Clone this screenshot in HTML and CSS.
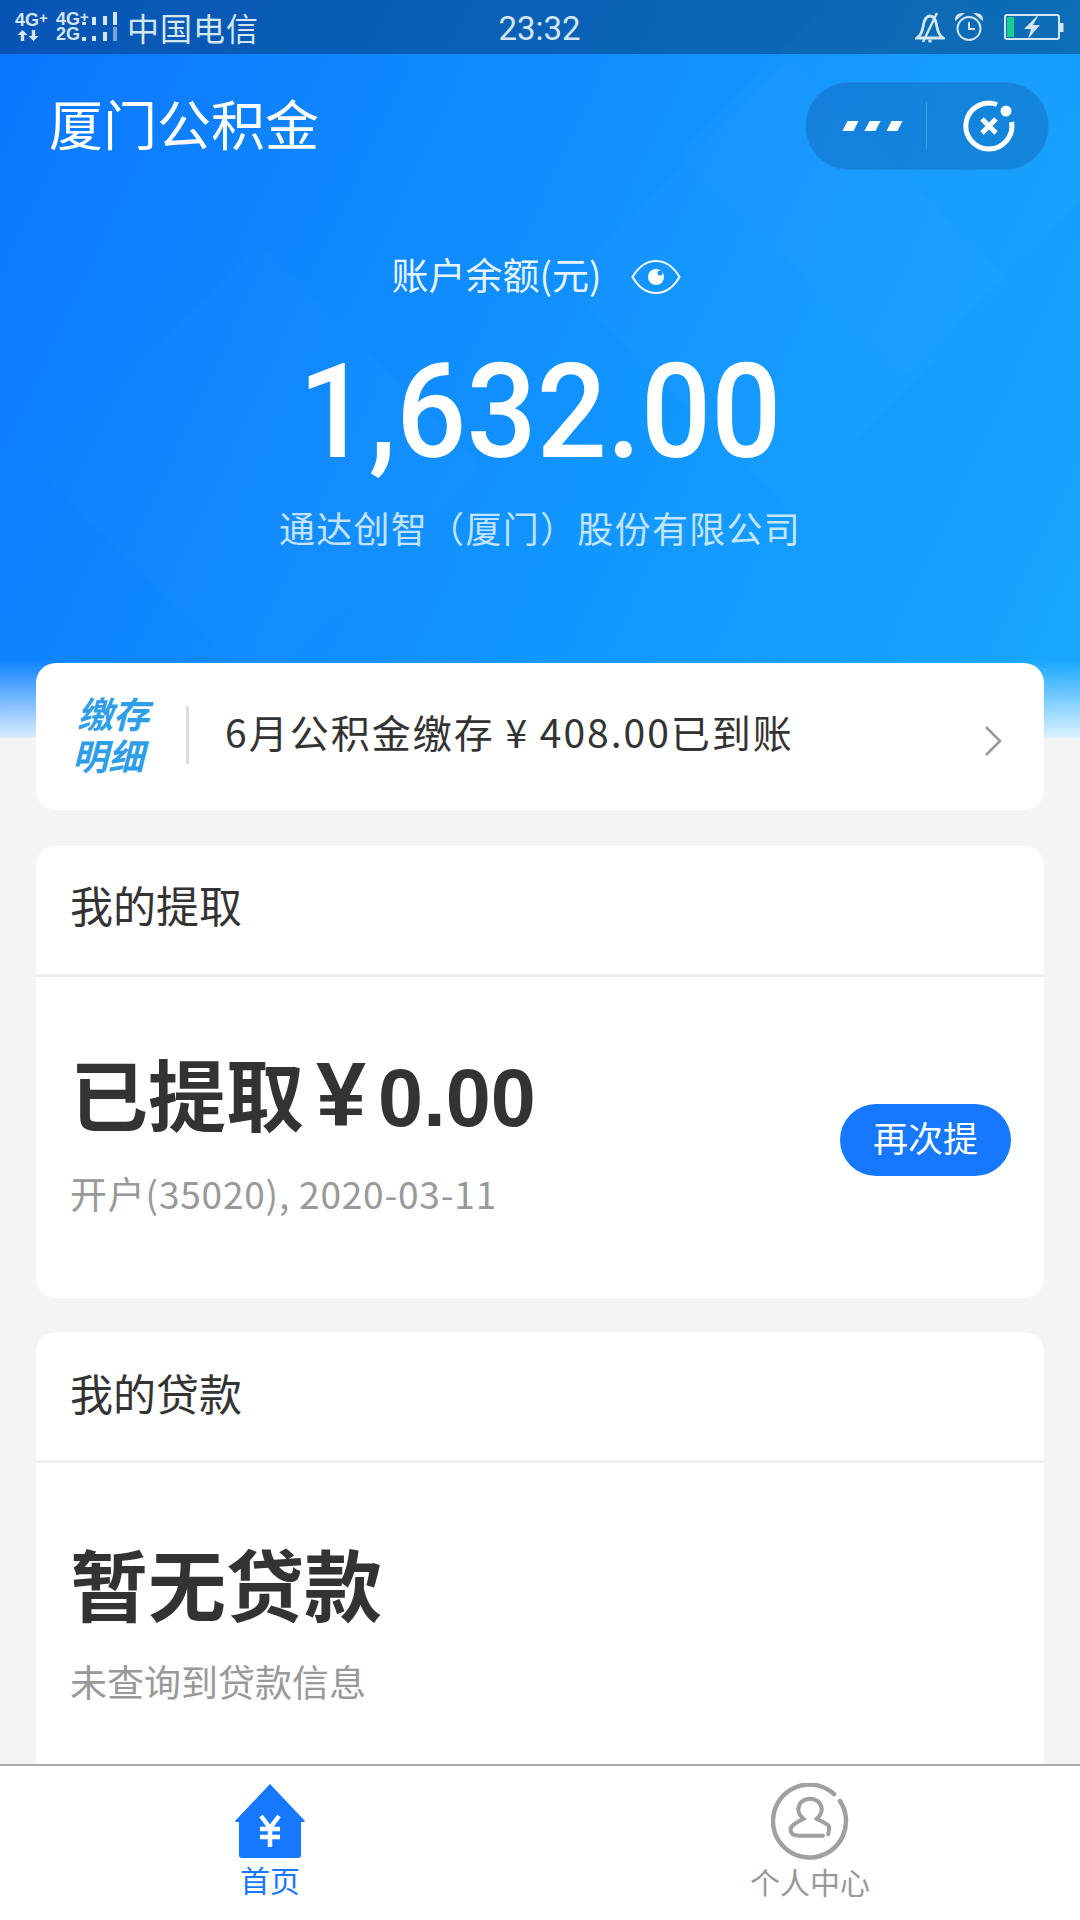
FILE: index.html
```html
<!DOCTYPE html>
<html>
<head>
  <meta charset="utf-8">
  <title>厦门公积金</title>
  <link rel="stylesheet" href="styles.css">
</head>
<body>
  <div class="page">
    <header class="hero">
      <span class="diamond diamond-left"></span>
      <span class="diamond diamond-mid"></span>
      <span class="diamond diamond-right"></span>

      <div class="status-bar">
        <div class="status-left">
          <div class="net">
            <span>4G<sup>+</sup></span>
            <svg class="net-arrows" width="22" height="11" viewBox="0 0 22 11"><path d="M5.500 0l5 5H7.200v6H3.800V5H.5zM16.500 11l-5-5h3.300V0h3.400v6h3.300z" fill="#d5e6f3"/></svg>
          </div>
          <div class="net net-second">
            <span>4G<sup>+</sup></span>
            <span>2G</span>
          </div>
          <svg class="signal" width="36" height="30" viewBox="0 0 36 30">
            <g fill="#d5e6f3">
              <rect x="0" y="25" width="4" height="4"/>
              <rect x="0" y="10" width="4" height="3"/>
              <rect x="10" y="24" width="4" height="5"/>
              <rect x="10" y="5" width="4" height="8"/>
              <rect x="21" y="20" width="4" height="9"/>
              <rect x="21" y="4" width="4" height="9"/>
              <rect x="31" y="0" width="4" height="13"/>
              <rect x="31" y="15" width="4" height="14" opacity=".55"/>
            </g>
          </svg>
          <span class="carrier">中国电信</span>
        </div>
        <span class="clock">23:32</span>
        <div class="status-right">
          <svg width="30" height="31" viewBox="0 0 30 31" fill="none" stroke="#d5e6f3" stroke-width="2.800">
            <path d="M2 26c3-2 5-5 6-11 1-7 3-11 7-11s6 4 7 11c1 6 3 9 6 11z"/>
            <path d="M8 30L22 1" stroke-width="2.400"/>
            <circle cx="15" cy="29" r="1.800" fill="#d5e6f3" stroke="none"/>
          </svg>
          <svg class="alarm" width="28" height="28" viewBox="0 0 28 28" fill="none" stroke="#d5e6f3" stroke-width="2">
            <circle cx="14" cy="15.500" r="11.500"/>
            <path d="M14 9v7h6"/>
            <path d="M1 6c0-3 3-5 6-5zM27 6c0-3-3-5-6-5z" fill="#d5e6f3"/>
          </svg>
          <svg class="battery" width="60" height="26" viewBox="0 0 60 26" fill="none">
            <rect x="1" y="1" width="54" height="24" rx="2" stroke="#d5e6f3" stroke-width="2"/>
            <rect x="3" y="3" width="7" height="20" fill="#16cf8f"/>
            <rect x="56" y="9" width="3.500" height="9" fill="#d5e6f3"/>
            <path d="M33 2L20 15h7l-3 10 12-14h-7l5-9z" fill="#d5e6f3"/>
          </svg>
        </div>
      </div>

      <div class="title-bar">
        <span class="app-title">厦门公积金</span>
        <div class="capsule">
          <div class="capsule-more">
            <i></i><i></i><i></i>
          </div>
          <div class="capsule-close">
            <svg width="56" height="56" viewBox="0 0 56 56" fill="none" stroke="#fff">
              <path d="M36 6.500A23 23 0 1 0 50.500 24" stroke-width="5"/>
              <path d="M21 21l14 14M35 21L21 35" stroke-width="5"/>
              <circle cx="45" cy="13" r="5.500" fill="#fff" stroke="none"/>
            </svg>
          </div>
        </div>
      </div>

      <div class="balance">
        <div class="balance-label">
          <span>账户余额(元)</span>
          <svg class="eye" width="50" height="36" viewBox="0 0 50 36" fill="none">
            <path d="M1.500 18C8 7 16 2 25 2s17 5 23.500 16C42 29 34 34 25 34S8 29 1.500 18z" stroke="#fff" stroke-opacity=".9" stroke-width="2.200"/>
            <circle cx="25" cy="18" r="8" fill="#fff"/>
            <circle cx="29" cy="14" r="2.500" fill="#1691ff"/>
          </svg>
        </div>
        <div class="balance-amount">1,632.00</div>
        <div class="company">通达创智（厦门）股份有限公司</div>
      </div>
    </header>

    <main class="content">
      <section class="card notice">
        <div class="notice-tag">缴存<br><span>明细</span></div>
        <div class="notice-text">6月公积金缴存 ¥ 408.00已到账</div>
        <svg class="chevron" width="18" height="32" viewBox="0 0 18 32" fill="none"><path d="M2 2l14 14L2 30" stroke="#999" stroke-width="2.500"/></svg>
      </section>

      <section class="card">
        <div class="card-head">我的提取</div>
        <div class="card-body withdraw">
          <div>
            <div class="big-text">已提取<span class="yen">¥</span><span class="big-num">0.00</span></div>
            <div class="sub-text sub-date">开户(35020), 2020-03-11</div>
          </div>
          <button class="again-btn">再次提</button>
        </div>
      </section>

      <section class="card loan">
        <div class="card-head">我的贷款</div>
        <div class="card-body">
          <div class="big-text">暂无贷款</div>
          <div class="sub-text">未查询到贷款信息</div>
        </div>
      </section>
    </main>

    <nav class="tabbar">
      <div class="tab tab-active">
        <svg width="72" height="76" viewBox="0 0 72 76">
          <path d="M36 1l35 37-1 1h-3v33a3 3 0 0 1-3 3H8a3 3 0 0 1-3-3V39H2l-1-1z" fill="#1677ff"/>
          <path d="M27 33l9 12 9-12M36 45v19M26 46h20M26 54h20" fill="none" stroke="#fff" stroke-width="4.500"/>
        </svg>
        <span>首页</span>
      </div>
      <div class="tab">
        <svg width="78" height="78" viewBox="0 0 78 78" fill="none" stroke="#a0a0a0" stroke-linecap="round">
          <path d="M63 11A36.500 36.500 0 1 0 69 18" stroke-width="4.500"/>
          <path d="M52 52.700H29c-6 0-9.500-2-9.500-6 0-5 8-8 13-11-3.500-3-5.200-6-5.200-9 0-6.500 5-11 11.700-11s11.700 4.500 11.700 11c0 3-1.700 6-5 9 5 3 13 5.500 12.500 9.500-.1 2-.5 4-1 6" stroke-width="4"/>
        </svg>
        <span>个人中心</span>
      </div>
    </nav>
  </div>
</body>
</html>
```

FILE: styles.css
```css
* {
  box-sizing: border-box;
}

html,
body {
  margin: 0;
  padding: 0;
}

body {
  font-family: "Noto Sans CJK SC", "Noto Sans", sans-serif;
  color: #333;
  background: #f4f4f4;
}

.page {
  width: 1080px;
  height: 1920px;
  display: flex;
  flex-direction: column;
  overflow: hidden;
}

/* blue top part */
.hero {
  position: relative;
  height: 738px;
  flex: none;
  overflow: hidden;
  background:
    linear-gradient(to bottom, rgba(255, 255, 255, 0) 660px, rgba(255, 255, 255, .85) 738px),
    linear-gradient(115deg, #0c76ff 0%, #1194ff 55%, #18a8ff 100%);
}

.diamond {
  position: absolute;
  width: 317px;
  height: 317px;
  transform: rotate(45deg);
  background: rgba(255, 255, 255, .014);
  border-radius: 12px;
}

.diamond-left {
  left: 100px;
  top: 308px;
}

.diamond-mid {
  left: 630px;
  top: 125px;
}

.diamond-right {
  left: 744px;
  top: -4px;
}

.status-bar {
  position: relative;
  height: 54px;
  padding: 0 16px 0 15px;
  display: flex;
  align-items: center;
  justify-content: space-between;
  background: rgba(0, 30, 60, .38);
  color: #d5e6f3;
}

.status-left {
  width: 380px;
  display: flex;
  align-items: center;
}

.status-right {
  width: 380px;
  display: flex;
  align-items: center;
  justify-content: flex-end;
}

.alarm {
  margin-left: 10px;
}

.battery {
  margin-left: 21px;
}

.net {
  width: 40px;
  display: flex;
  flex-direction: column;
  font-family: "Liberation Sans", sans-serif;
  font-size: 18px;
  font-weight: bold;
  line-height: 15px;
  white-space: nowrap;
}

.net sup {
  font-size: 15px;
  line-height: 0;
  vertical-align: 3px;
}

.net-second {
  width: 27px;
  padding-left: 1px;
}

.net-arrows {
  margin: 2px 0 0 2px;
}

.carrier {
  margin-left: 9px;
  font-size: 32px;
  letter-spacing: 1px;
  line-height: 40px;
}

.clock {
  padding-top: 3px;
  font-family: "Roboto", sans-serif;
  font-size: 33px;
}

.title-bar {
  position: relative;
  height: 144px;
  padding: 0 31px 8px 49px;
  display: flex;
  align-items: center;
  justify-content: space-between;
}

.app-title {
  font-size: 54px;
  color: #fff;
}

.capsule {
  width: 244px;
  height: 88px;
  margin-top: 8px;
  display: flex;
  align-items: center;
  border-radius: 44px;
  background: rgba(10, 70, 130, .28);
  border: 1px solid rgba(255, 255, 255, .06);
}

.capsule-more {
  width: 121px;
  height: 48px;
  display: flex;
  align-items: center;
  justify-content: flex-end;
  gap: 11px;
  padding-right: 26px;
  border-right: 1px solid rgba(255, 255, 255, .2);
}

.capsule-more i {
  width: 11px;
  height: 10px;
  background: #fff;
  transform: skewX(-27deg);
}

.capsule-close {
  flex: 1;
  display: flex;
  justify-content: center;
  padding-left: 2px;
}

.balance {
  position: relative;
  text-align: center;
  color: #fff;
}

.balance-label {
  margin-top: 51px;
  height: 50px;
  padding-right: 8px;
  display: flex;
  align-items: center;
  justify-content: center;
  gap: 29px;
  font-size: 37px;
  color: rgba(255, 255, 255, .92);
}

.eye {
  margin-top: 6px;
}

.balance-amount {
  margin-top: 38px;
  font-family: "Roboto", sans-serif;
  font-size: 132px;
  font-weight: 500;
  line-height: 150px;
  transform: scaleX(.935);
}

.company {
  margin-top: 15px;
  font-size: 36px;
  line-height: 50px;
  letter-spacing: 1.300px;
  color: rgba(255, 255, 255, .75);
}

/* cards */
.content {
  flex: 1;
  min-height: 0;
  overflow: hidden;
  padding: 0 36px;
  margin-top: -75px;
  position: relative;
}

.card {
  background: #fff;
  border-radius: 20px;
  margin-bottom: 36px;
}

.notice {
  height: 147px;
  display: flex;
  align-items: center;
  padding: 0 42px 0 39px;
}

.notice-tag {
  width: 111px;
  height: 75px;
  font-size: 36px;
  line-height: 42px;
  font-weight: bold;
  font-style: italic;
  color: #2f9ee8;
  padding-left: 2px;
  margin-top: -16px;
}

.notice-tag span {
  margin-left: -5px;
}

.notice-text {
  flex: 1;
  height: 58px;
  margin-top: -4px;
  padding-left: 36px;
  border-left: 3px solid #ddd;
  font-size: 39px;
  line-height: 50px;
  letter-spacing: 2px;
}

.chevron {
  margin-top: 8px;
}

.card-head {
  height: 131px;
  padding: 0 34px;
  font-size: 43px;
  line-height: 116px;
  border-bottom: 3px solid #eee;
}

.loan .card-head {
  line-height: 120px;
}

.card-body {
  padding: 71px 33px 0 34px;
}

.withdraw {
  height: 321px;
  padding-top: 67px;
  display: flex;
  justify-content: space-between;
  align-items: flex-start;
}

.big-text {
  font-size: 78px;
  line-height: 110px;
  font-weight: bold;
  font-family: "Liberation Sans", "Noto Sans CJK SC", sans-serif;
  white-space: nowrap;
}

.yen {
  margin: 0 12px 0 12px;
  font-size: 90px;
  line-height: 0;
}

.big-num {
  font-size: 81px;
  line-height: 0;
}

.sub-text {
  margin-top: 12px;
  font-size: 37px;
  line-height: 50px;
  color: #999;
}

.sub-date {
  margin-top: 14px;
  letter-spacing: .8px;
}

.again-btn {
  width: 171px;
  height: 72px;
  margin-top: 60px;
  padding: 0 0 8px;
  border: none;
  border-radius: 36px;
  background: #1677ff;
  color: #fff;
  font-family: inherit;
  font-size: 35px;
}

.loan {
  height: 500px;
  margin-top: -2px;
}

/* bottom tabs */
.tabbar {
  height: 156px;
  flex: none;
  position: relative;
  display: flex;
  background: #fff;
  border-top: 2px solid #aaa;
}

.tab {
  width: 540px;
  padding-top: 17px;
  display: flex;
  flex-direction: column;
  align-items: center;
  font-size: 30px;
  line-height: 36px;
  color: #999;
}

.tab span {
  margin-top: 2px;
}

.tab-active {
  color: #1677ff;
}
```
